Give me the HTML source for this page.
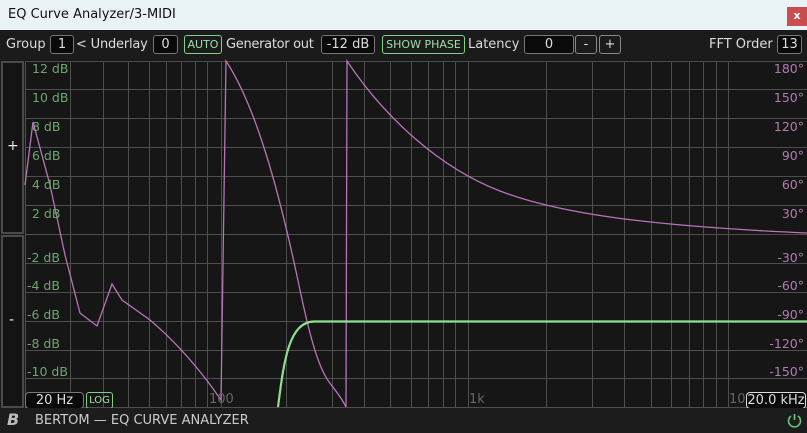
<!DOCTYPE html>
<html><head><meta charset="utf-8"><style>
*{margin:0;padding:0;box-sizing:border-box}
body{width:807px;height:433px;overflow:hidden;background:#161616;font-family:"DejaVu Sans","Liberation Sans",sans-serif;position:relative}
.a{position:absolute;white-space:nowrap}
.tb{left:0;top:0;width:807px;height:30px;background:#e9f2f5}
.tool{left:0;top:30px;width:807px;height:30px;background:#1b1b1b}
.t{color:#ddd;font-size:13px;top:37px}
.box{border:1px solid #777;border-radius:3px;background:#0a0a0a;color:#ddd;font-size:13px;text-align:center;height:19px;top:35px;line-height:17px}
.gbox{border:1px solid #7fd08a;border-radius:3px;color:#9fe0a6;font-size:11px;text-align:center;height:19px;top:35px;line-height:17px}
.db{color:#6da66d;font-size:12.5px;left:32px}
.dg{color:#b37ab3;font-size:12.5px;right:3px}
</style></head><body>
<div class="a tb"></div>
<div class="a" style="left:8px;top:7px;font-size:13px;color:#111">EQ Curve Analyzer/3-MIDI</div>
<div class="a" style="left:787px;top:7px;width:20px;height:19px;background:#c84d4f;color:#fff;font-size:11px;text-align:center;line-height:18px;font-weight:bold">x</div>
<div class="a tool"></div>
<div class="a t" style="left:6px">Group</div>
<div class="a box" style="left:50px;width:24px">1</div>
<div class="a t" style="left:76px;letter-spacing:-0.2px">&lt; Underlay</div>
<div class="a box" style="left:153px;width:25px">0</div>
<div class="a gbox" style="left:184px;width:38px">AUTO</div>
<div class="a t" style="left:226px;letter-spacing:-0.3px">Generator out</div>
<div class="a box" style="left:321px;width:54px">-12 dB</div>
<div class="a gbox" style="left:382px;width:83px">SHOW PHASE</div>
<div class="a t" style="left:468px">Latency</div>
<div class="a box" style="left:524px;width:50px">0</div>
<div class="a box" style="left:575px;width:22px;background:#1b1b1b;border-color:#888">-</div>
<div class="a box" style="left:599px;width:22px;background:#1b1b1b;border-color:#888">+</div>
<div class="a t" style="left:709px">FFT Order</div>
<div class="a box" style="left:777px;width:25px">13</div>

<div class="a" style="left:0;top:60px;width:25px;height:348px;background:#1b1b1b"></div>
<div class="a" style="left:1px;top:61px;width:23px;height:173px;border:2px solid #4a4a4a;background:#141414"></div>
<div class="a" style="left:1px;top:235px;width:23px;height:173px;border:2px solid #4a4a4a;background:#141414"></div>
<div class="a" style="left:7px;top:138px;color:#eee;font-size:14px">+</div>
<div class="a" style="left:9px;top:312px;color:#eee;font-size:14px">-</div>

<svg class="a" style="left:0;top:0" width="807" height="433">
<g stroke="#4e4e4e" stroke-width="1" fill="none">
<path d="M25 61.5H807M25 89.5H807M25 118.5H807M25 147.5H807M25 176.5H807M25 205.5H807M25 234.5H807M25 263.5H807M25 292.5H807M25 321.5H807M25 350.5H807M25 378.5H807M25 407.5H807"/>
<path d="M25.5 61V407M70.5 61V407M103.5 61V407M128.5 61V407M149.5 61V407M166.5 61V407M181.5 61V407M195.5 61V407M207.5 61V407M221.5 61V407M286.5 61V407M332.5 61V407M364.5 61V407M390.5 61V407M411.5 61V407M428.5 61V407M443.5 61V407M455.5 61V407M468.5 61V407M546.5 61V407M592.5 61V407M624.5 61V407M651.5 61V407M671.5 61V407M689.5 61V407M703.5 61V407M716.5 61V407M728.5 61V407"/>
</g>
<g stroke="#b774b7" stroke-width="1.3" fill="none">
<path d="M25 185L33 122L50 185L65 255L80 313L97 326L112 284L122 300L150 320C170 337 195 362 221 400L226 61C255 105 278 185 300 290S330 375 346 407L347 61C385 118 440 168 500 191S650 226 807 233"/>
</g>
<path d="M278 407C284 360 289 321 315 321.5L807 321.5" stroke="#8de08f" stroke-width="2.2" fill="none"/>
</svg>

<div class="a db" style="top:61px">12 dB</div>
<div class="a db" style="top:90px">10 dB</div>
<div class="a db" style="top:119px">8 dB</div>
<div class="a db" style="top:148px">6 dB</div>
<div class="a db" style="top:177px">4 dB</div>
<div class="a db" style="top:206px">2 dB</div>
<div class="a db" style="top:250px;left:27px">-2 dB</div>
<div class="a db" style="top:278px;left:27px">-4 dB</div>
<div class="a db" style="top:307px;left:27px">-6 dB</div>
<div class="a db" style="top:336px;left:27px">-8 dB</div>
<div class="a db" style="top:364px;left:27px">-10 dB</div>
<div class="a dg" style="top:61px">180°</div>
<div class="a dg" style="top:90px">150°</div>
<div class="a dg" style="top:119px">120°</div>
<div class="a dg" style="top:148px">90°</div>
<div class="a dg" style="top:177px">60°</div>
<div class="a dg" style="top:206px">30°</div>
<div class="a dg" style="top:250px">-30°</div>
<div class="a dg" style="top:278px">-60°</div>
<div class="a dg" style="top:307px">-90°</div>
<div class="a dg" style="top:336px">-120°</div>
<div class="a dg" style="top:364px">-150°</div>
<div class="a" style="left:209px;top:392px;color:#666;font-size:13px">100</div>
<div class="a" style="left:469px;top:392px;color:#666;font-size:13px">1k</div>
<div class="a" style="left:729px;top:392px;color:#666;font-size:13px">10k</div>
<div class="a box" style="left:25px;top:392px;width:59px;height:17px;line-height:15px;border-radius:4px">20 Hz</div>
<div class="a gbox" style="left:86px;top:392px;width:27px;height:17px;line-height:15px;font-size:10px">LOG</div>
<div class="a box" style="left:746px;top:392px;width:60px;height:17px;line-height:15px;border-color:#ddd;border-radius:4px">20.0 kHz</div>

<div class="a" style="left:0;top:408px;width:807px;height:25px;background:#1c1c1c"></div>
<div class="a" style="left:7px;top:410px;color:#bbb;font-size:16px;font-style:italic;font-weight:bold">B</div>
<div class="a" style="left:35px;top:413px;color:#ccc;font-size:13px">BERTOM — EQ CURVE ANALYZER</div>
<svg class="a" style="left:786px;top:412px" width="17" height="17" viewBox="0 0 17 17"><path d="M5 4A6 6 0 1 0 12 4" stroke="#6fc47a" stroke-width="1.6" fill="none"/><path d="M8.5 2V8" stroke="#6fc47a" stroke-width="1.6"/></svg>
</body></html>
